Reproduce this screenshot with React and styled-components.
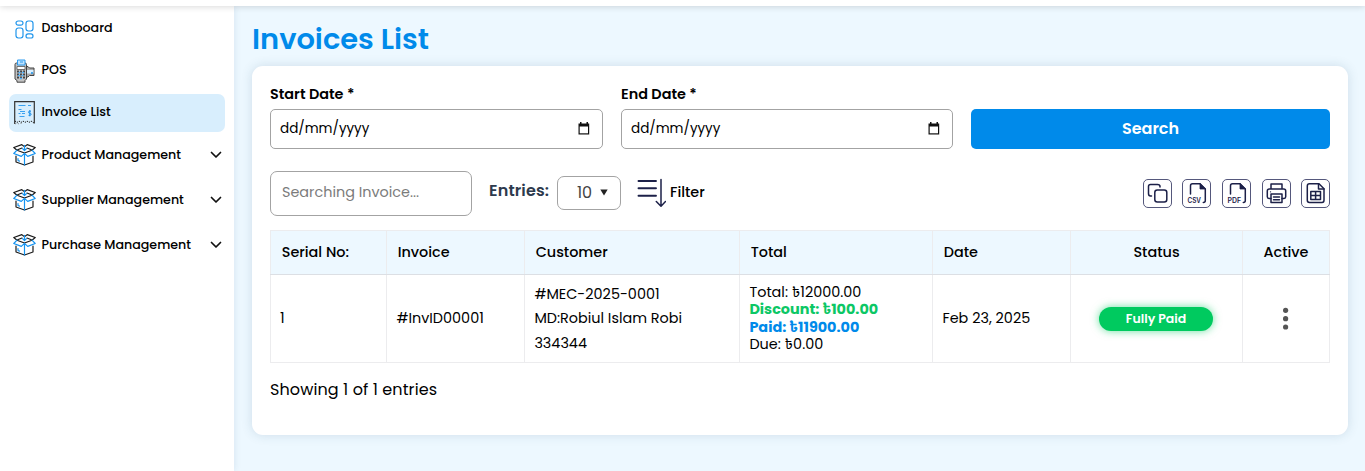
import React from "react";
import styled, { createGlobalStyle } from "styled-components";

const blue = "#008aea";
const navy = "#1c2048";

const Global = createGlobalStyle`
  * { box-sizing: border-box; }
  body { margin: 0; background: #edf8ff; overflow: hidden; }
  body, input, button { font-family: Poppins, "Noto Sans Bengali", Inter, sans-serif; color: #000; }
`;

const Page = styled.div`
  height: 471px;
  display: flex;
  flex-direction: column;
`;
const TopBar = styled.header`
  height: 6px;
  flex: none;
  background: #fff;
  box-shadow: 0 0 7px rgba(0, 0, 0, 0.2);
  position: relative;
  z-index: 2;
`;
const Body = styled.div`
  flex: 1;
  display: flex;
`;
const Sidebar = styled.nav`
  width: 234px;
  background: #fff;
  box-shadow: 0 0 7px rgba(40, 80, 120, 0.13);
  padding: 4px 9px;
  display: flex;
  flex-direction: column;
`;
const NavItem = styled.a`
  height: 38px;
  flex: none;
  margin-bottom: ${(p) => (p.$group ? 7 : 4)}px;
  padding: 0 3px 0 5px;
  display: flex;
  align-items: center;
  gap: 6.5px;
  border-radius: 7px;
  background: ${(p) => (p.$active ? "#d8eefd" : "transparent")};
`;
const NavIcon = styled.span`
  width: 21px;
  display: flex;
  justify-content: center;
  svg { flex: none; }
`;
const NavLabel = styled.span`
  flex: 1;
  white-space: nowrap;
  font-size: 12.65px;
  font-weight: 500;
  line-height: 20px;
  padding-bottom: ${(p) => (p.$group ? 1 : 2)}px;
`;
const Main = styled.main`
  flex: 1;
  padding: 12px 17px 0 18px;
`;
const Title = styled.h1`
  margin: 0;
  height: 48px;
  line-height: 42px;
  font-size: 28.9px;
  font-weight: 600;
  color: ${blue};
`;
const Card = styled.section`
  height: 369px;
  padding: 18px;
  background: #fff;
  border-radius: 11px;
  box-shadow: 0 0 11px rgba(50, 90, 120, 0.17);
`;
const SearchForm = styled.div`
  display: grid;
  grid-template-columns: 333px 332px 359px;
  column-gap: 18px;
  align-items: end;
`;
const FieldLabel = styled.label`
  display: block;
  height: 25px;
  line-height: 21px;
  font-size: 14.4px;
  font-weight: 600;
`;
const DateBox = styled.div`
  height: 40px;
  border: 1px solid #a3a3a3;
  border-radius: 5px;
  padding: 0 12px 1px 9px;
  display: flex;
  align-items: center;
  justify-content: space-between;
  font-size: 13.5px;
`;
const SearchButton = styled.button`
  height: 40px;
  border: 0;
  padding: 0 0 1px;
  border-radius: 5px;
  background: ${blue};
  color: #fff;
  font-size: 16px;
  font-weight: 600;
`;
const Toolbar = styled.div`
  margin-top: 22px;
  height: 45px;
  display: flex;
  align-items: center;
`;
const SearchInput = styled.input`
  width: 202px;
  height: 45px;
  border: 1px solid #a3a3a3;
  border-radius: 7px;
  padding: 0 10px 2px 11px;
  font-size: 14.4px;
  &::placeholder { color: #7b7b7b; }
`;
const EntriesLabel = styled.span`
  width: 85px;
  padding: 0 0 6px 17px;
  font-size: 16px;
  font-weight: 600;
  letter-spacing: 0.15px;
  color: #2d3a4d;
`;
const Select = styled.div`
  width: 64px;
  height: 34px;
  margin: 0 16px 2px 0;
  border: 1px solid #a3a3a3;
  border-radius: 7px;
  padding: 0 12px 1px 19px;
  display: flex;
  align-items: center;
  justify-content: space-between;
  font-size: 16px;
  color: #444;
`;
const FilterButton = styled.span`
  display: flex;
  align-items: center;
  gap: 4px;
  margin-bottom: 2px;
  font-size: 14.4px;
  font-weight: 500;
`;
const Exports = styled.div`
  margin: 0 -0.3px 0 auto;
  display: flex;
  gap: 10.65px;
`;
const ExportButton = styled.span`
  width: 29px;
  height: 29px;
  border: 1px solid #55587c;
  border-radius: 5px;
  display: flex;
  align-items: center;
  justify-content: center;
`;
const Table = styled.div`
  margin-top: 14px;
  border-top: 1px solid #ececee;
`;
const Row = styled.div`
  display: grid;
  grid-template-columns: 117px 138px 215px 193px 138px 172px 87px;
  height: ${(p) => (p.$head ? 44 : 88)}px;
  background: ${(p) => (p.$head ? "#edf8ff" : "#fff")};
  border-bottom: 1px solid ${(p) => (p.$head ? "#dcdfe4" : "#ececee")};
`;
const Cell = styled.div`
  border-right: 1px solid #ececee;
  padding: 0 ${(p) => (p.$center ? 1 : 9)}px ${(p) => (p.$lines ? 0 : 1)}px ${(p) => (p.$center ? 0 : 9.4)}px;
  display: flex;
  flex-direction: column;
  justify-content: center;
  align-items: ${(p) => (p.$center ? "center" : "flex-start")};
  white-space: nowrap;
  font-size: 14.4px;
  &:first-child { border-left: 1px solid #ececee; padding-left: 9px; }
`;
const HeadCell = styled(Cell)`
  padding-left: ${(p) => (p.$center ? 1 : 10.7)}px;
  font-weight: 500;
  &:first-child { padding-left: 10.7px; }
`;
const Line = styled.span`
  line-height: 24.5px;
`;
const Amount = styled.span`
  height: 17.2px;
  line-height: 17px;
  font-weight: ${(p) => (p.$strong ? 700 : 400)};
  color: ${(p) => p.$color || "#000"};
`;
const Badge = styled.span`
  width: 114px;
  height: 24px;
  margin-top: 2px;
  border-radius: 12px;
  background: #00ca5f;
  box-shadow: 0 0 9px rgba(0, 202, 95, 0.6);
  color: #fff;
  font-size: 12.5px;
  font-weight: 600;
  line-height: 24px;
  text-align: center;
`;
const Summary = styled.p`
  margin: 15px 0 0;
  line-height: 24px;
  font-size: 16px;
  letter-spacing: 0.1px;
`;

const DashboardIcon = () => (
  <svg width="19" height="19" viewBox="0 0 19 19" fill="none" stroke="#2196ec" strokeWidth="1.2">
    <rect x="1" y="1" width="7" height="4.2" rx="2.1" />
    <rect x="1" y="8" width="7" height="10" rx="2.4" />
    <rect x="11" y="1" width="7" height="10" rx="2.4" />
    <rect x="11" y="13.8" width="7" height="4.2" rx="2.1" />
  </svg>
);
const PosIcon = () => (
  <svg width="21" height="24" viewBox="0 0 21 24" fill="none">
    <path d="M12 7.500h2l1.500 1.500H20v7.500h-4.500L14 18h-2z" fill="#aaa" stroke="#444" />
    <path d="M13 11h6.500v3.500H13z" fill="#d9efff" />
    <path d="M17 14h2" stroke="#178fe6" strokeWidth="1.500" />
    <path d="M1 5.500q0-1.500 1.500-1.500h8.500q1.500 0 1.500 1.500V20l-1.500 1.500v1.700H3v-1.700L1 20z" fill="#c3c3c3" stroke="#444" />
    <path d="M3.500 1h7.500v5H3.500z" fill="#bfe3ff" stroke="#2d9bee" />
    <path d="M6 3h3" stroke="#2d9bee" />
    <path d="M3 7.500h8v3H3z" fill="#fff" stroke="#555" strokeWidth=".8" />
    <path d="M3 12.500h8M3 15.500h8M3 18.500h8" stroke="#444" strokeWidth="2" strokeDasharray="2 1" />
    <path d="M4.500 13.500h2M8 13.500h2M4 16.500h2M7.500 16.500h2M6 19.500h2" stroke="#4fb1fb" strokeWidth="1.500" />
  </svg>
);
const InvoiceIcon = () => (
  <svg width="21" height="24" viewBox="0 0 21 24" fill="none">
    <path d="M1 .6h19v20H.7z" fill="#d8eefd" />
    <path d="M.7 23V.7h19.600V22.500" stroke="#333" strokeWidth="1.200" />
    <path d="M1 20l2 1.500L5 20l2 1.500L9 20l2 1.500 2-1.500 2 1.500 2-1.500 3 2" stroke="#222" strokeDasharray="1.500 1" />
    <path d="M1 23l2-1 2 1 2-1 2 1" stroke="#777" strokeWidth=".8" strokeDasharray="1.500 1.500" />
    <path d="M4.500 4.500h7M14 4.500h3M4.500 8.500h3M6 10.500h5M4.500 12.500h2M8 12.500h3M5.500 15.500h5" stroke="#3ba2f0" />
    <path d="M17 10.200h-1.500q-1 .1-1 1t1 1h.6q1 .2 1 1.100t-1 1h-1.600M15.800 9v6.300" stroke="#1e90e8" />
  </svg>
);
const BoxIcon = () => (
  <svg width="23" height="22" viewBox="0 0 23 22" fill="none" strokeWidth="1.200" strokeLinejoin="round" strokeLinecap="round">
    <path d="M3 12v6l8.500 3 8.500-3v-6M4 6.200L.8 3.500l8-2.900L10.500 2M19 6.200l3.200-2.700-8-2.900L12.500 2M4 6.200L11.500 9 19 6.200M4 6l5-2M19 6l-5-2" stroke="#1b1b1b" />
    <path d="M4 6.200L.8 9.500 8.300 12.400l3.200-3 3.200 3 7.500-2.900L19 6.200M11.500 9.500V21" stroke="#1593f0" />
    <path d="M11.500 1.300V6M9.500 4.600l2 1.900 2-1.900M5 14.500v2l1.500.6" stroke="#1593f0" />
  </svg>
);
const Chevron = () => (
  <svg width="12" height="8" viewBox="0 0 12 8" fill="none" stroke="#111" strokeWidth="1.700" strokeLinecap="round" strokeLinejoin="round">
    <path d="M1.500 1.500L6 6l4.500-4.500" />
  </svg>
);
const CalendarIcon = () => (
  <svg width="12" height="13" viewBox="0 0 12 13">
    <path d="M2 0h1.500v1.500h5V0H10v1.500h1.200v11H.5v-11H2z" fill="#111" />
    <path d="M1.700 4.500H10v6.800H1.700z" fill="#fff" />
  </svg>
);
const SortIcon = () => (
  <svg width="29" height="30" viewBox="0 0 29 30" fill="none" stroke={navy} strokeLinecap="round" strokeLinejoin="round">
    <path d="M1.500 3h17.500M1.500 10.300h17.500M1.500 17.800h17.500" strokeWidth="1.900" />
    <path d="M24 1.500V28M19.300 23.500L24 28.300l4.500-4.800" strokeWidth="1.500" />
  </svg>
);
const Glyph = ({ children }) => (
  <svg width="27" height="27" viewBox="0 0 27 27" fill="none" stroke={navy} strokeWidth="1.500" strokeLinecap="round" strokeLinejoin="round">
    {children}
  </svg>
);
const CopyIcon = () => (
  <Glyph>
    <rect x="10.800" y="10" width="12" height="12" rx="2.500" />
    <path d="M7.500 16H6.500q-2 0-2-2.500V6.500q0-2 2-2h7q2.500 0 2.500 2v.5" />
  </Glyph>
);
const TypeIcon = ({ name }) => (
  <Glyph>
    <path d="M7.500 14V5.800q0-2 2-2h7.500L22.300 9v11.500q0 2-2 2" />
    <path d="M17 3.800V9h5.300z" fill={navy} strokeWidth=".8" />
    <text x="4.500" y="23.200" textLength="13.500" lengthAdjust="spacingAndGlyphs" fontSize="7" fontWeight="600" fill={navy} stroke="none" fontFamily="Inter, sans-serif">{name}</text>
  </Glyph>
);
const PrintIcon = () => (
  <Glyph>
    <path d="M8 9V4h11v5M8 18.500H6q-1.700 0-1.700-1.700V11q0-2 2-2h14.400q2 0 2 2v5.800q0 1.700-1.700 1.700h-2" />
    <path d="M8 14h11v8.500H8zM10.500 17h6M10.500 19.700h6" />
    <path d="M7.500 11.800h2" strokeWidth="1.200" strokeDasharray=".1 2" />
  </Glyph>
);
const SheetIcon = () => (
  <Glyph>
    <path d="M7.500 3.800h9.500l5 5v11.500q0 2.200-2 2.200H7.500q-2.200 0-2.200-2.200V6q0-2.200 2.200-2.200z" />
    <path d="M16.500 4v5H22" />
    <path d="M8.800 11.500h9.700v8H8.800zM8.800 15.500h9.700M13.600 11.500v8" />
  </Glyph>
);
const DotsIcon = () => (
  <svg width="6" height="24" viewBox="0 0 6 24" fill="#555">
    <circle cx="2.600" cy="4.300" r="2.600" />
    <circle cx="2.600" cy="12.700" r="2.600" />
    <circle cx="2.600" cy="21" r="2.600" />
  </svg>
);
const Caret = () => (
  <svg width="8" height="7" viewBox="0 0 8 7" fill="#222">
    <path d="M.3.5h7.400L4 6.500z" />
  </svg>
);

const nav = [
  { label: "Dashboard", icon: DashboardIcon },
  { label: "POS", icon: PosIcon },
  { label: "Invoice List", icon: InvoiceIcon, active: true },
  { label: "Product Management", icon: BoxIcon, group: true },
  { label: "Supplier Management", icon: BoxIcon, group: true },
  { label: "Purchase Management", icon: BoxIcon, group: true },
];
const columns = [
  ["Serial No:"],
  ["Invoice"],
  ["Customer"],
  ["Total"],
  ["Date"],
  ["Status", true],
  ["Active", true],
];

const DateField = ({ label }) => (
  <div>
    <FieldLabel>{label}</FieldLabel>
    <DateBox>
      dd/mm/yyyy
      <CalendarIcon />
    </DateBox>
  </div>
);

export default function App() {
  return (
    <Page>
      <Global />
      <TopBar />
      <Body>
        <Sidebar>
          {nav.map(({ label, icon: Icon, active, group }) => (
            <NavItem key={label} $active={active} $group={group}>
              <NavIcon><Icon /></NavIcon>
              <NavLabel $group={group}>{label}</NavLabel>
              {group && <Chevron />}
            </NavItem>
          ))}
        </Sidebar>
        <Main>
          <Title>Invoices List</Title>
          <Card>
            <SearchForm>
              <DateField label="Start Date *" />
              <DateField label="End Date *" />
              <SearchButton>Search</SearchButton>
            </SearchForm>
            <Toolbar>
              <SearchInput placeholder="Searching Invoice..." />
              <EntriesLabel>Entries:</EntriesLabel>
              <Select>10<Caret /></Select>
              <FilterButton><SortIcon />Filter</FilterButton>
              <Exports>
                <ExportButton><CopyIcon /></ExportButton>
                <ExportButton><TypeIcon name="CSV" /></ExportButton>
                <ExportButton><TypeIcon name="PDF" /></ExportButton>
                <ExportButton><PrintIcon /></ExportButton>
                <ExportButton><SheetIcon /></ExportButton>
              </Exports>
            </Toolbar>
            <Table>
              <Row $head>
                {columns.map(([name, center]) => (
                  <HeadCell key={name} $center={center}>{name}</HeadCell>
                ))}
              </Row>
              <Row>
                <Cell><Line>1</Line></Cell>
                <Cell><Line>#InvID00001</Line></Cell>
                <Cell $lines>
                  <Line>#MEC-2025-0001</Line>
                  <Line>MD:Robiul Islam Robi</Line>
                  <Line>334344</Line>
                </Cell>
                <Cell $lines>
                  <Amount>Total: ৳12000.00</Amount>
                  <Amount $strong $color="#0cc765">Discount: ৳100.00</Amount>
                  <Amount $strong $color={blue}>Paid: ৳11900.00</Amount>
                  <Amount>Due: ৳0.00</Amount>
                </Cell>
                <Cell><Line>Feb 23, 2025</Line></Cell>
                <Cell $center><Badge>Fully Paid</Badge></Cell>
                <Cell $center><DotsIcon /></Cell>
              </Row>
            </Table>
            <Summary>Showing 1 of 1 entries</Summary>
          </Card>
        </Main>
      </Body>
    </Page>
  );
}
